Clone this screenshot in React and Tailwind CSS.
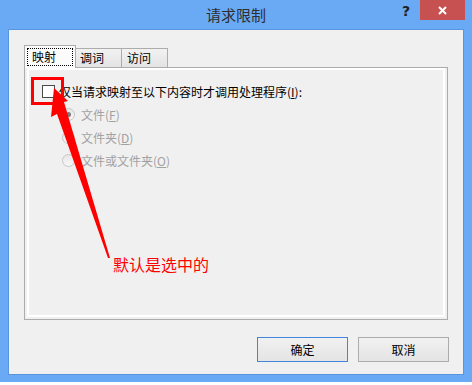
export default function App() {
  const radios = [
    { label: '文件', key: 'F', checked: true },
    { label: '文件夹', key: 'D' },
    { label: '文件或文件夹', key: 'O' },
  ];

  return (
    <div className="relative w-[472px] h-[385px] bg-[#6aaaf5] flex flex-col overflow-hidden font-['Noto_Sans_CJK_SC',sans-serif] text-[12px] text-black">
      {/* title bar */}
      <div className="h-[29px] flex items-start">
        <div className="w-[74px]" />
        <div className="flex-1 text-center text-[15px] leading-[20px] pt-[5px] text-[#2e2e2e]">请求限制</div>
        <div className="w-[74px] flex justify-end pr-[7px]">
          <div className="w-[16px] mr-[6px] pt-[2px] text-center text-[14px] font-bold leading-[18px] text-[#1e1e1e] font-['DejaVu_Sans',sans-serif]">?</div>
          <div className="w-[45px] h-[20px] bg-[#c75050] flex items-center justify-center">
            <svg width="9" height="9" viewBox="0 0 9 9">
              <path d="M1 1 L8 8 M8 1 L1 8" stroke="#fff" strokeWidth="2" />
            </svg>
          </div>
        </div>
      </div>

      {/* dialog body */}
      <div className="mx-[8px] h-[346px] bg-[#f0f0f0] border border-[#5a94dc] pt-[15px] pl-[15px] flex flex-col">
        <div className="flex items-end h-[22px]">
          <div className="relative z-10 w-[52px] h-[23px] -mb-px bg-[#fbfbfb] border-l border-t border-r border-[#acacac] p-[2px]">
            <div className="h-[18px] border border-dotted border-black flex items-center pl-[4px] leading-[14px]">映射</div>
          </div>
          <div className="w-[46px] h-[19px] border-t border-r border-[#acacac] bg-linear-to-b from-[#f2f2f2] to-[#e3e3e3] flex items-center pl-[4px]">调词</div>
          <div className="w-[46px] h-[19px] border-t border-r border-[#acacac] bg-linear-to-b from-[#f2f2f2] to-[#e3e3e3] flex items-center pl-[5px]">访问</div>
        </div>

        <div className="w-[424px] h-[253px] border border-[#acacac] px-[2px] pb-[2px]">
          <div className="h-full border-2 border-white pl-[13px] pt-[10px]">
            <div className="h-[23px] flex items-center">
              <div className="w-[13px] h-[13px] border border-[#4a4a4a] bg-white" />
              <span className="ml-[4px]">
                仅当请求映射至以下内容时才调用处理程序(<span className="underline">I</span>):
              </span>
            </div>
            {radios.map((r) => (
              <div key={r.key} className="h-[23px] flex items-center pl-[20px] text-[#a2a2a2]">
                <div className="w-[13px] h-[13px] rounded-full border border-[#c6c6c6] bg-linear-to-b from-[#e6e6e6] to-[#f8f8f8] flex items-center justify-center">
                  {r.checked && <div className="w-[5px] h-[5px] rounded-full bg-[#7c7c7c]" />}
                </div>
                <span className="ml-[6px]">
                  {r.label}(<span className="underline">{r.key}</span>)
                </span>
              </div>
            ))}
          </div>
        </div>

        <div className="mt-[17px] flex justify-end gap-[10px] pr-[14px]">
          <button className="w-[91px] h-[25px] border border-[#3f86dc] bg-linear-to-b from-[#f1f1f1] to-[#e4e4e4] text-[12px]">确定</button>
          <button className="w-[91px] h-[25px] border border-[#acacac] bg-linear-to-b from-[#f1f1f1] to-[#e4e4e4] text-[12px]">取消</button>
        </div>
      </div>

      <div className="h-[7px]" />
      <div className="h-[3px] bg-white" />

      {/* annotation */}
      <svg className="absolute left-0 top-0 pointer-events-none" width="472" height="385" viewBox="0 0 472 385">
        <rect x="32.5" y="78.5" width="30" height="25" fill="none" stroke="#ff0000" strokeWidth="3" />
        <polygon points="54,88 68,101 64,102 110,258 108,258 57,114 51,117" fill="#ff0000" />
      </svg>
      <div className="absolute left-[113px] top-[254px] text-[16px] leading-[20px] text-[#ff0000]">默认是选中的</div>
    </div>
  );
}
